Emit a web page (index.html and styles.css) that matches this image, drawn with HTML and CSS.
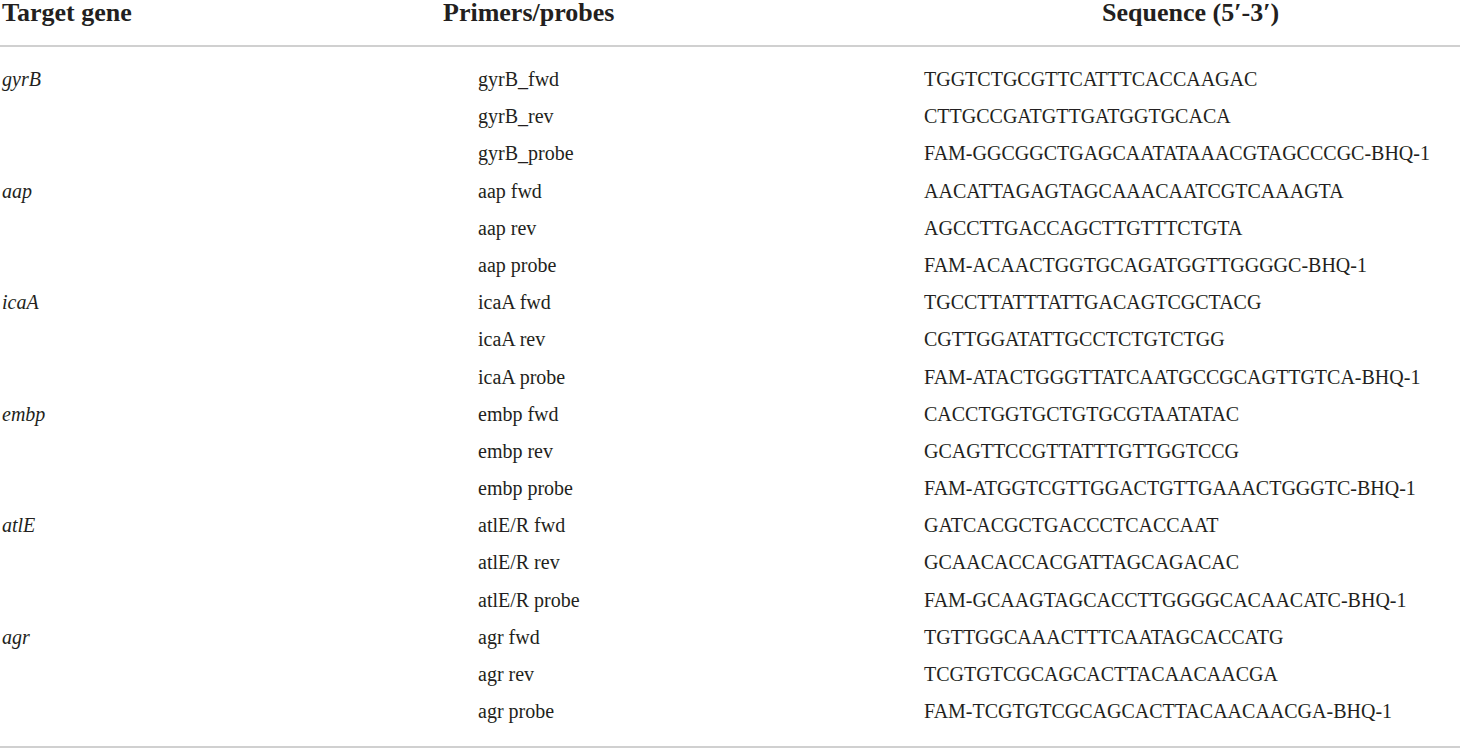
FILE: index.html
```html
<!DOCTYPE html>
<html lang="en">
<head>
<meta charset="utf-8">
<title>Primers and probes</title>
<link rel="stylesheet" href="styles.css">
</head>
<body>
<div class="table">
  <div class="head">
    <div class="h h1">Target gene</div>
    <div class="h h2">Primers/probes</div>
    <div class="h h3">Sequence (5′-3′)</div>
  </div>
  <div class="body">
    <div class="gene">gyrB</div><div class="primer">gyrB_fwd</div><div class="seq">TGGTCTGCGTTCATTTCACCAAGAC</div>
    <div class="gene"></div><div class="primer">gyrB_rev</div><div class="seq">CTTGCCGATGTTGATGGTGCACA</div>
    <div class="gene"></div><div class="primer">gyrB_probe</div><div class="seq">FAM-GGCGGCTGAGCAATATAAACGTAGCCCGC-BHQ-1</div>
    <div class="gene">aap</div><div class="primer">aap fwd</div><div class="seq">AACATTAGAGTAGCAAACAATCGTCAAAGTA</div>
    <div class="gene"></div><div class="primer">aap rev</div><div class="seq">AGCCTTGACCAGCTTGTTTCTGTA</div>
    <div class="gene"></div><div class="primer">aap probe</div><div class="seq">FAM-ACAACTGGTGCAGATGGTTGGGGC-BHQ-1</div>
    <div class="gene">icaA</div><div class="primer">icaA fwd</div><div class="seq">TGCCTTATTTATTGACAGTCGCTACG</div>
    <div class="gene"></div><div class="primer">icaA rev</div><div class="seq">CGTTGGATATTGCCTCTGTCTGG</div>
    <div class="gene"></div><div class="primer">icaA probe</div><div class="seq">FAM-ATACTGGGTTATCAATGCCGCAGTTGTCA-BHQ-1</div>
    <div class="gene">embp</div><div class="primer">embp fwd</div><div class="seq">CACCTGGTGCTGTGCGTAATATAC</div>
    <div class="gene"></div><div class="primer">embp rev</div><div class="seq">GCAGTTCCGTTATTTGTTGGTCCG</div>
    <div class="gene"></div><div class="primer">embp probe</div><div class="seq">FAM-ATGGTCGTTGGACTGTTGAAACTGGGTC-BHQ-1</div>
    <div class="gene">atlE</div><div class="primer">atlE/R fwd</div><div class="seq">GATCACGCTGACCCTCACCAAT</div>
    <div class="gene"></div><div class="primer">atlE/R rev</div><div class="seq">GCAACACCACGATTAGCAGACAC</div>
    <div class="gene"></div><div class="primer">atlE/R probe</div><div class="seq">FAM-GCAAGTAGCACCTTGGGGCACAACATC-BHQ-1</div>
    <div class="gene">agr</div><div class="primer">agr fwd</div><div class="seq">TGTTGGCAAACTTTCAATAGCACCATG</div>
    <div class="gene"></div><div class="primer">agr rev</div><div class="seq">TCGTGTCGCAGCACTTACAACAACGA</div>
    <div class="gene"></div><div class="primer">agr probe</div><div class="seq">FAM-TCGTGTCGCAGCACTTACAACAACGA-BHQ-1</div>
  </div>
</div>
</body>
</html>
```
FILE: styles.css
```css
html, body {
  margin: 0;
  padding: 0;
  background: #ffffff;
}
body {
  font-family: "Liberation Serif", "Times New Roman", serif;
  color: #231f20;
}
.table {
  width: 1460px;
}
.head {
  display: grid;
  grid-template-columns: 443px 659px 1fr;
  height: 45px;
  border-bottom: 2px solid #d0d0d0;
  box-sizing: content-box;
}
.h {
  font-weight: bold;
  font-size: 26px;
  line-height: 25px;
  white-space: nowrap;
}
.h1 {
  padding-left: 2px;
}
.body {
  display: grid;
  grid-template-columns: 478px 446px 1fr;
  grid-auto-rows: 37.2px;
  padding: 14px 0 15.4px;
  border-bottom: 2px solid #d0d0d0;
  font-size: 20px;
  line-height: 37.2px;
}
.gene {
  font-style: italic;
  padding-left: 2px;
}
.primer, .seq {
  white-space: nowrap;
}
```
